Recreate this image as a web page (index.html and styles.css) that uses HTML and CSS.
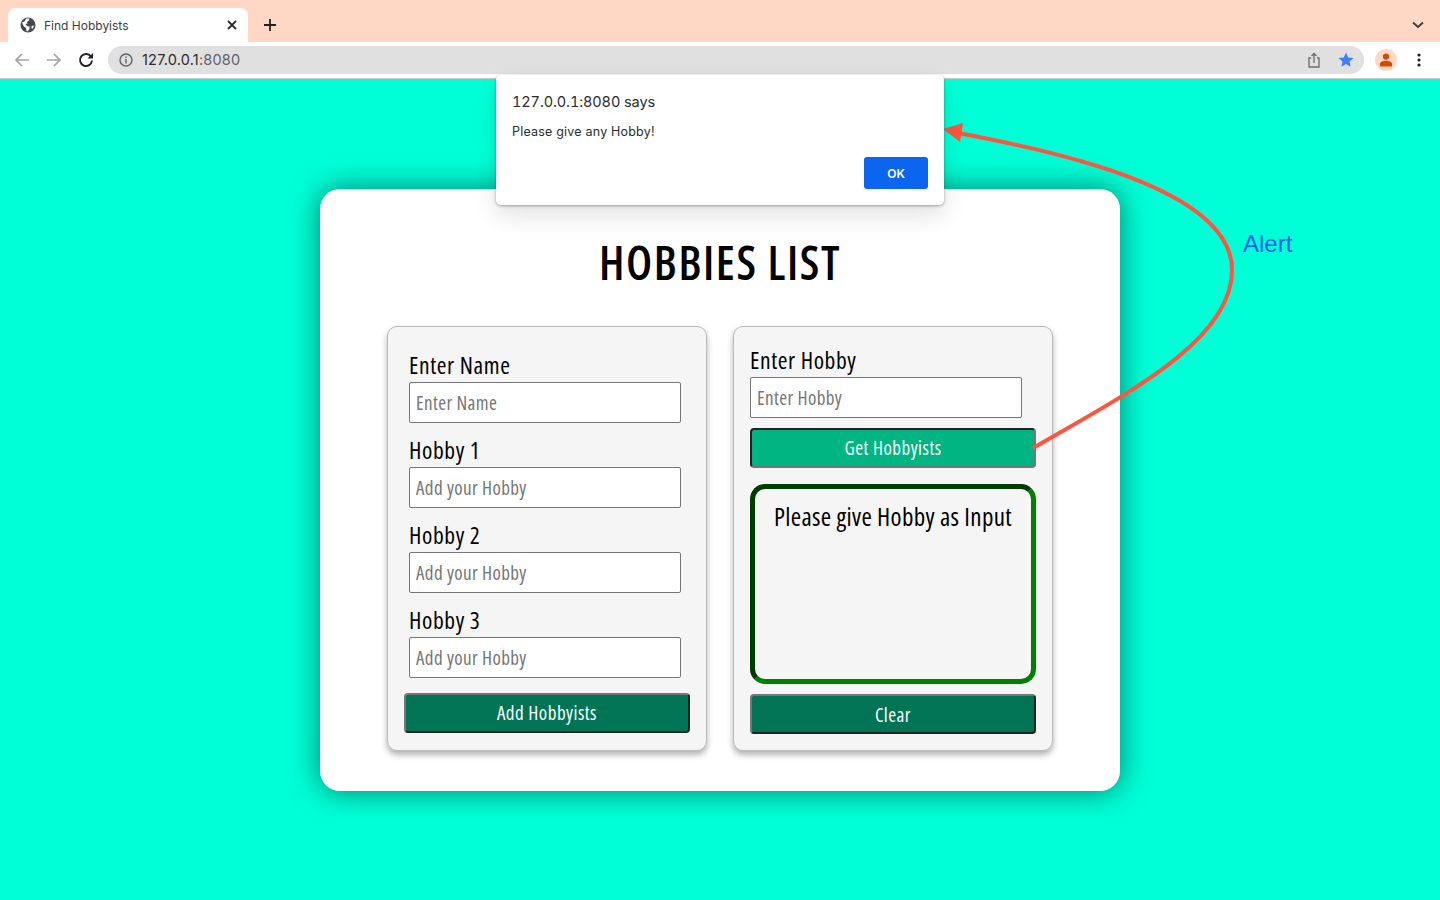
FILE: index.html
```html
<!DOCTYPE html>
<html lang="en">
<head>
    <meta charset="UTF-8">
    <meta name="viewport" content="width=device-width, initial-scale=1.0">
    <title>Find Hobbyists</title>
    <link rel="stylesheet" href="styles.css">
</head>
<body>
    <div class="tabstrip">
        <div class="tab">
            <svg class="globe" width="16" height="16" viewBox="0 0 16 16"><circle cx="8" cy="8" r="7.5" fill="#45474b"/><path d="M2 5.5 L5 4 L6 1.5 L9.5 1.5 L9 3.5 L7 5 L7.5 6.5 L5.5 7 L7 9 L9.5 9.5 L9.5 12 L7.5 14.5 L6.5 14 L6 11 L3.5 9 Z M11.5 9 L14 8.5 L13 11.5 L11.5 11.5 Z" fill="#fff"/></svg>
            <span class="tab-title">Find Hobbyists</span>
            <svg class="tab-close" width="10" height="10" viewBox="0 0 10 10"><path d="M1 1 L9 9 M9 1 L1 9" stroke="#2b2c2f" stroke-width="1.8"/></svg>
        </div>
        <svg class="new-tab" width="14" height="14" viewBox="0 0 14 14"><path d="M7 1 V13 M1 7 H13" stroke="#202124" stroke-width="1.8"/></svg>
        <svg class="tab-menu" width="12" height="8" viewBox="0 0 12 8"><path d="M1 1.5 L6 6 L11 1.5" stroke="#3c3c3c" stroke-width="1.8" fill="none"/></svg>
    </div>
    <div class="toolbar">
        <svg class="nav" width="16" height="16" viewBox="0 0 16 16"><path d="M15 8 H2 M8 2 L2 8 L8 14" stroke="#a4a4a4" stroke-width="1.7" fill="none"/></svg>
        <svg class="nav" width="16" height="16" viewBox="0 0 16 16"><path d="M1 8 H14 M8 2 L14 8 L8 14" stroke="#a4a4a4" stroke-width="1.7" fill="none"/></svg>
        <svg class="nav" width="16" height="16" viewBox="0 0 16 16"><path d="M13 4.6 A6 6 0 1 0 14 8.5" stroke="#202124" stroke-width="1.9" fill="none"/><path d="M9.5 6.5 H15 V1 Z" fill="#202124"/></svg>
        <div class="address">
            <svg width="14" height="14" viewBox="0 0 14 14"><circle cx="7" cy="7" r="6" stroke="#5f6368" stroke-width="1.4" fill="none"/><path d="M7 6 V10.5 M7 3.5 V5" stroke="#5f6368" stroke-width="1.4"/></svg>
            <span class="url">127.0.0.1<span class="port">:8080</span></span>
            <svg class="share" width="14" height="16" viewBox="0 0 14 16"><path d="M4 6 H2 V15 H12 V6 H10 M7 11 V1.5 M4.5 4 L7 1.5 L9.5 4" stroke="#6c6c6c" stroke-width="1.3" fill="none"/></svg>
            <svg width="16" height="15" viewBox="0 0 16 15"><path d="M8 0.5 L10.2 5.4 L15.5 6 L11.5 9.5 L12.7 14.7 L8 12 L3.3 14.7 L4.5 9.5 L0.5 6 L5.8 5.4 Z" fill="#3b7ffb"/></svg>
        </div>
        <div class="avatar">
            <svg width="14" height="14" viewBox="0 0 14 14"><circle cx="7" cy="3.6" r="3.1" fill="#d24a04"/><path d="M1 13.5 V11 C1 8.8 4 7.8 7 7.8 C10 7.8 13 8.8 13 11 V13.5 Z" fill="#d24a04"/></svg>
        </div>
        <svg class="dots" width="4" height="14" viewBox="0 0 4 14"><circle cx="2" cy="2" r="1.6" fill="#202124"/><circle cx="2" cy="7" r="1.6" fill="#202124"/><circle cx="2" cy="12" r="1.6" fill="#202124"/></svg>
    </div>

    <div class="page">
        <div class="card">
            <h1>HOBBIES LIST</h1>
            <div class="panels">
                <div class="panel left">
                    <label for="name">Enter Name</label>
                    <input type="text" id="name" placeholder="Enter Name">
                    <label for="hobby1">Hobby 1</label>
                    <input type="text" id="hobby1" placeholder="Add your Hobby">
                    <label for="hobby2">Hobby 2</label>
                    <input type="text" id="hobby2" placeholder="Add your Hobby">
                    <label for="hobby3">Hobby 3</label>
                    <input type="text" id="hobby3" placeholder="Add your Hobby">
                    <button class="btn btn-dark btn-add">Add Hobbyists</button>
                </div>
                <div class="panel right">
                    <label for="hobby">Enter Hobby</label>
                    <input type="text" id="hobby" placeholder="Enter Hobby">
                    <button class="btn btn-get">Get Hobbyists</button>
                    <div class="result">Please give Hobby as Input</div>
                    <button class="btn btn-dark btn-clear">Clear</button>
                </div>
            </div>
        </div>
    </div>

    <svg class="arrow" width="1440" height="900" viewBox="0 0 1440 900">
        <path d="M1033 448 C1130 392 1232 340 1232 270 C1232 190 1060 152 958 133" stroke="#ff5540" stroke-width="4" fill="none"/>
        <path d="M943 129 L963 123 L960 142 Z" fill="#ff5540"/>
    </svg>
    <div class="arrow-label">Alert</div>

    <div class="alert">
        <div class="alert-title">127.0.0.1:8080 says</div>
        <div class="alert-msg">Please give any Hobby!</div>
        <div class="alert-actions"><button class="alert-ok">OK</button></div>
    </div>
</body>
</html>
```

FILE: styles.css
```css
* { box-sizing: border-box; }
body { margin: 0; height: 900px; overflow: hidden; display: flex; flex-direction: column; background: #00ffd7; font-family: "Open Sans", sans-serif; font-stretch: 75%; }

.tabstrip { height: 42px; background: #ffd8c5; display: flex; align-items: flex-end; padding-left: 8px; position: relative; }
.tab { width: 240px; height: 34px; background: #fff; border-radius: 8px 8px 0 0; display: flex; align-items: center; padding: 0 11px 0 12px; }
.tab-title { font: 12px Inter, sans-serif; color: #3c4043; margin-left: 8px; flex: 1; }
.new-tab { margin: 0 0 10px 15px; }
.tab-menu { margin: 0 16px 13px auto; }

.toolbar { height: 37px; background: #fff; border-bottom: 1px solid #c9c9c9; display: flex; align-items: center; padding: 0 0 1px 14px; }
.nav { margin-right: 16px; }
.address { width: 1256px; height: 28px; margin-left: -2px; background: #e0e0e0; border-radius: 14px; display: flex; align-items: center; padding: 0 10px 0 11px; }
.url { font: 14.5px Inter, sans-serif; letter-spacing: 0.2px; color: #2b2c2f; margin-left: 9px; flex: 1; }
.port { color: #5f6368; }
.share { margin-right: 17px; }
.avatar { width: 22px; height: 22px; margin-left: 11px; border-radius: 50%; background: #ffd8c5; display: flex; align-items: center; justify-content: center; }
.dots { margin-left: 20px; }

.page { flex: 1; padding-top: 110px; }
.card { width: 800px; height: 602px; margin: 0 auto; background: #fff; border-radius: 20px; box-shadow: 0 0 30px rgba(0, 0, 0, 0.5); padding-top: 46px; }
h1 { margin: 0 0 37px; height: 54px; line-height: 54px; text-align: center; font-size: 46px; font-weight: 600; letter-spacing: 1.6px; color: #000; }
.panels { display: flex; justify-content: center; gap: 26px; }
.panel { width: 320px; height: 425px; background: #f5f5f5; border: 1px solid #bbb; border-radius: 10px; box-shadow: 0 4px 6px rgba(0, 0, 0, 0.3); display: flex; flex-direction: column; align-items: flex-start; }
.left { padding: 27px 0 0 21px; }
.right { padding: 22px 0 0 16px; }
label { display: block; height: 28px; line-height: 22px; font-size: 23.5px; letter-spacing: 0.6px; color: #000; }
.left input { margin-bottom: 16px; }
input { width: 272px; height: 41px; padding: 0 6px; border: 1px solid #767676; border-radius: 2px; background: #fff; font: 19px "Open Sans", sans-serif; font-stretch: 75%; letter-spacing: 0.4px; }
input::placeholder { color: #757575; }

.btn { width: 286px; height: 40px; border: 2px solid; border-radius: 4px; font: 19px "Open Sans", sans-serif; font-stretch: 75%; letter-spacing: 0.5px; color: #fff; cursor: pointer; }
.btn-dark { background: #007455; border-color: #767676 #222 #222 #767676; }
.btn-get { margin-top: 10px; background: #00b582; border-color: #222 #767676 #767676 #222; }
.btn-add { margin: -1px 0 0 -5px; }
.result { width: 286px; height: 200px; margin-top: 16px; border: 5px solid; border-color: #003c00 #008000 #008000 #003c00; border-radius: 15px; padding-top: 10px; text-align: center; white-space: nowrap; font-size: 25px; letter-spacing: 0.35px; color: #000; }
.btn-clear { margin-top: 10px; padding-top: 3px; }

.arrow { position: absolute; left: 0; top: 0; pointer-events: none; }
.arrow-label { position: absolute; left: 1243px; top: 230px; font: 24px "Liberation Sans", sans-serif; color: #0f5fe6; }

.alert { position: absolute; left: 496px; top: 75px; width: 448px; height: 130px; padding: 18px 16px 16px; background: #fff; border-radius: 5px; box-shadow: 0 1px 3px rgba(0, 0, 0, 0.35), 0 10px 25px rgba(0, 0, 0, 0.12); font-family: Inter, sans-serif; font-stretch: normal; color: #2b2c2f; }
.alert-title { font-size: 14.5px; line-height: 18px; font-feature-settings: "tnum"; letter-spacing: -0.1px; }
.alert-msg { font-size: 12.5px; line-height: 16px; margin-top: 13px; letter-spacing: 0.2px; }
.alert-actions { display: flex; justify-content: flex-end; margin-top: 17px; }
.alert-ok { width: 64px; height: 32px; background: #0b65ee; border: none; border-radius: 3px; color: #fff; font: 600 12px Inter, sans-serif; }
```
